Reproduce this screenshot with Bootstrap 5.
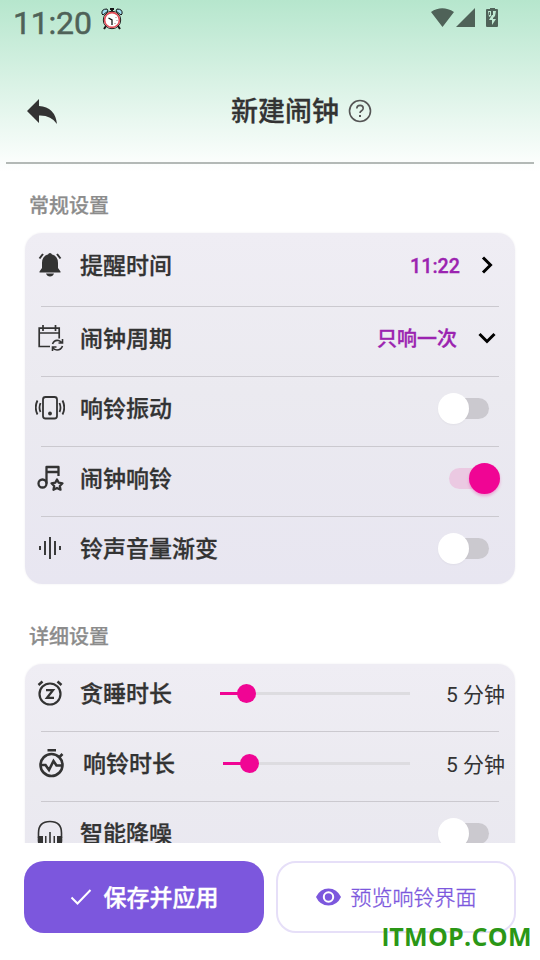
<!DOCTYPE html>
<html lang="zh-CN">
<head>
<meta charset="utf-8">
<meta name="viewport" content="width=device-width, initial-scale=1">
<title>新建闹钟</title>
<link href="https://cdn.jsdelivr.net/npm/bootstrap@5.3.0/dist/css/bootstrap.min.css" rel="stylesheet">
<style>
body{font-family:Roboto,"Noto Sans CJK SC",sans-serif;color:#333;background:linear-gradient(#b6e6cd 0,#fff 172px) #fff no-repeat;width:540px;height:960px;overflow:hidden}
svg{display:block;flex:none}
.status{height:60px;padding:0 41px 0 13px;color:#4f6258}
.clock{font-size:32px;font-weight:400;line-height:46px;letter-spacing:-.2px;-webkit-text-stroke:.5px #4f6258;width:78px}
.topbar{height:104px;margin:0 6px;padding:0 20px;border-bottom:2px solid #b3b9b6}
.heading{margin-left:173px}
.page-title{font-size:27px;font-weight:500;line-height:40px;padding-top:2px;-webkit-text-stroke:.3px}
.scroller{height:679px}
.section-label{font-size:20px;font-weight:500;line-height:30px;color:#8c8c8c;padding-left:29px;-webkit-text-stroke:.25px}
.first-label{padding-top:27px;height:69px}
.second-label{padding-top:38px;height:80px}
.panel{margin:0 25px;border-radius:17px;background:linear-gradient(#efedf4,#ebeaf0 45%,#e8e6f1 100%);box-shadow:0 0 2px rgba(70,60,90,.09)}
.setting{height:70px;padding:0 9px 8px 10px;font-size:23px;font-weight:500}
.setting .pic{width:30px;margin-right:15px}
.item-name{padding-top:4px;-webkit-text-stroke:.3px}
.h-row .item-name{padding-top:6px}
.rule{height:1px;margin:0 16px;background:#cbc9cf}
.h-first{height:73px;padding-bottom:9px}
.h-row{height:69px}
.h-last{height:67px;padding-bottom:5px}
.h-slide{height:67px;padding-bottom:9px}
.value{font-size:20px;color:#9b23b0;line-height:30px;padding-top:2px;-webkit-text-stroke:.3px}
.time-value{font-size:19.7px;padding-top:4px}
.toggle{width:52px;height:32px;margin-right:16px;position:relative}
.toggle::before{content:"";position:absolute;left:10px;top:6px;width:41px;height:21px;border-radius:11px;background:#cbc9cf}
.toggle::after{content:"";position:absolute;left:0;top:1px;width:31px;height:31px;border-radius:50%;background:#fff;box-shadow:0 1px 2px rgba(0,0,0,.04)}
.toggle.on{margin-right:6px}
.toggle.on::before{left:1px;background:#ebc9e2}
.toggle.on::after{left:21px;background:#f00594;box-shadow:0 2px 3px rgba(240,5,148,.3)}
.slider{height:19px;position:relative}
.slider::before{content:"";position:absolute;left:0;right:0;top:8px;height:3px;background:#dddce0}
.slider i{position:absolute;left:0;top:8px;height:3px;width:27px;background:#f00594}
.slider i::after{content:"";position:absolute;right:-9px;top:-8px;width:19px;height:19px;border-radius:50%;background:#f00594}
.s-one{width:190px}.s-two{width:187px}
.h-row .slider{top:1px}
.minutes{font-size:21px;font-weight:400;width:95px;margin-right:1px;text-align:right;line-height:30px;padding-top:4px}
.actions{height:117px;padding:18px 24px 0;gap:12px}
.action{height:72px;border-radius:20px;font-size:23px;line-height:34px;width:240px;padding:0}
.action span{padding-top:3px}
.save,.save:hover{background:#7c57dd;color:#fff;font-weight:500}
.save span{-webkit-text-stroke:.4px}
.preview,.preview:hover{border:2px solid #e6dff8;color:#7c57dd;font-size:21px;font-weight:300;background:#fff}
.preview span{padding-top:2px;-webkit-text-stroke:.35px}
.site-tag{position:absolute;left:382px;top:919px;font:700 25px/34px "Open Sans",sans-serif;color:#2b9716;white-space:nowrap;letter-spacing:.3px}
.site-tag span{font-family:"Liberation Sans",sans-serif}
</style>
<script src="https://cdn.jsdelivr.net/npm/bootstrap@5.3.0/dist/js/bootstrap.bundle.min.js"></script>
</head>
<body class="position-relative">
<div class="status d-flex align-items-start">
  <span class="clock">11:20</span>
  <svg class="mt-2" style="margin-left:10px" width="22" height="22" viewBox="0 0 22 22"><path d="M5 18l-2 3M17 18l2 3" stroke="#151515" stroke-width="2"/><path d="M1 6Q0 1 6 1l1 2-5 4zM21 6q1-5-5-5l-1 2 5 4z" fill="#9edcf0" stroke="#151515"/><path d="M9 1h4M11 1v3" stroke="#151515" stroke-width="2"/><circle cx="11" cy="12" r="8.7" fill="#fff" stroke="#151515"/><circle cx="11" cy="12" r="7.4" fill="#fff" stroke="#e24b55" stroke-width="1.6"/><path d="M7.500 10l3.500 2v5" fill="none" stroke="#151515" stroke-width="1.300"/><path d="M15 9v1M16 12v1M14 15v1" stroke="#888"/></svg>
  <svg class="ms-auto mt-2" width="68" height="20" viewBox="0 0 68 20" fill="currentColor"><path d="M0 4Q11-3.500 23 4L11.500 19zM44 0v19H25zM59 1V-1h5v2h2q1 0 1 1v16q0 1-1 1H56q-1 0-1-1V2q0-1 1-1z"/><path d="M57 3h3v5l-2 1zM62 3h3l-1 5-2 2zM61 7l-3 5h3v5l4-6h-3V7z" fill="#bfe8d2"/><path d="M58 4h1v3h-1z"/></svg>
</div>
<header class="topbar d-flex align-items-center">
  <svg width="32" height="26" viewBox="0 0 32 26"><path d="M1 13L13 1v7q16 1 18 18Q25 17 13 17.500V25z" fill="#333"/></svg>
  <div class="heading d-flex align-items-center">
    <h1 class="page-title m-0">新建闹钟</h1>
    <svg style="margin-left:9px" width="24" height="24" viewBox="0 0 24 24" fill="none" stroke="#555" stroke-width="1.6"><circle cx="12" cy="12" r="10.500"/><path d="M8.800 9.600q0-3.200 3.300-3.200 3.100 0 3.100 2.800 0 1.500-1.600 2.500Q12 12.700 12 14"/><path d="M12 16v2" stroke-width="2"/></svg>
  </div>
</header>
<main class="scroller overflow-hidden">
  <div class="section-label first-label">常规设置</div>
  <section class="panel">
    <div class="setting h-first d-flex align-items-center">
      <svg class="pic" width="30" height="26" viewBox="0 0 30 26"><path d="M15 1q1.500 0 2 1.500Q23 4 23 11v5l2.500 3.500v1h-21v-1L7 16v-5Q7 4 13 2.500 13.500 1 15 1zM11 21.500h8q-1 3-4 3t-4-3z" fill="#333"/><path d="M8 2L4.500 6.500M22 2l3.500 4.500" stroke="#333" stroke-width="2"/></svg>
      <span class="item-name">提醒时间</span><span class="value time-value ms-auto">11:22</span>
      <svg style="margin:0 11px 0 20px" width="15" height="20" viewBox="0 0 15 20"><path d="M3 2.500l7.500 7.500L3 17.500" fill="none" stroke="#000" stroke-width="3"/></svg>
    </div>
    <div class="rule"></div>
    <div class="setting h-row d-flex align-items-center">
      <svg class="pic" width="30" height="28" viewBox="0 0 30 28" fill="none" stroke="#333" stroke-width="1.700"><path d="M15 22.500H4.200V4.200h20v10.300M4.200 9h20M8 1v6M20.500 1v6"/><path d="M17.500 20q2-4.500 6-3.500 2 .5 3.500 2.500M27.500 15v4h-4M27.500 22q-1.500 4-5.500 4-2.500 0-4.500-2.500M17.500 27v-4h4" stroke-width="1.600"/></svg>
      <span class="item-name">闹钟周期</span><span class="value ms-auto">只响一次</span>
      <svg style="margin:0 9px 0 20px" width="20" height="15" viewBox="0 0 20 15"><path d="M2.500 4l7.500 7.500L17.500 4" fill="none" stroke="#000" stroke-width="3"/></svg>
    </div>
    <div class="rule"></div>
    <div class="setting h-row d-flex align-items-center">
      <svg class="pic" width="30" height="26" viewBox="0 0 30 26" fill="none" stroke="#333" stroke-width="1.800"><rect x="8" y="2" width="14" height="21.500" rx="2.500"/><circle cx="15" cy="18.500" r="1.900" fill="#333" stroke="none"/><path d="M5.500 8q-2 5 0 9M24.500 8q2 5 0 9M2.500 5.500q-3.500 7 0 14M27.500 5.500q3.500 7 0 14"/></svg>
      <span class="item-name">响铃振动</span><span class="toggle ms-auto"></span>
    </div>
    <div class="rule"></div>
    <div class="setting h-row d-flex align-items-center">
      <svg class="pic" width="30" height="28" viewBox="0 0 30 28" fill="none" stroke="#333" stroke-width="2.300" stroke-linejoin="round"><circle cx="7.500" cy="19.500" r="4"/><path d="M11.500 19.500V3h12v9M11.500 8h12"/><path d="M22 15.500l1.700 3.200 3.800.6-2.700 2.700.7 3.700-3.500-1.700-3.500 1.700.7-3.700-2.700-2.700 3.800-.6z"/></svg>
      <span class="item-name">闹钟响铃</span><span class="toggle on ms-auto"></span>
    </div>
    <div class="rule"></div>
    <div class="setting h-last d-flex align-items-center">
      <svg class="pic" width="30" height="24" viewBox="0 0 30 24"><path d="M5 10v4M10 5v14M15 1v22M20 5v14M25 10v4" stroke="#333" stroke-width="1.900"/></svg>
      <span class="item-name">铃声音量渐变</span><span class="toggle ms-auto"></span>
    </div>
  </section>
  <div class="section-label second-label">详细设置</div>
  <section class="panel">
    <div class="setting h-slide d-flex align-items-center">
      <svg class="pic" width="30" height="28" viewBox="0 0 30 28" fill="none" stroke="#333" stroke-width="2.200"><circle cx="15" cy="15" r="10.500"/><path d="M11 11.200h7l-6 7.600h7" stroke-width="2.300"/><path d="M3.500 6l4-3.500M26.500 6l-4-3.500" stroke-width="2.500"/></svg>
      <span class="item-name">贪睡时长</span><span class="slider s-one ms-auto"><i></i></span><span class="minutes">5 分钟</span>
    </div>
    <div class="rule"></div>
    <div class="setting h-row d-flex align-items-center">
      <svg class="pic" style="margin-right:18px" width="30" height="30" viewBox="0 0 30 30" fill="none" stroke="#333" stroke-width="2.600"><circle cx="16.500" cy="17" r="11"/><path d="M6 17h4.500l3.500 5 4.500-9 3 4.500H27M12.500 2.200h8.500M24.500 9l3-3"/></svg>
      <span class="item-name">响铃时长</span><span class="slider s-two ms-auto"><i></i></span><span class="minutes">5 分钟</span>
    </div>
    <div class="rule"></div>
    <div class="setting h-row d-flex align-items-center">
      <svg class="pic" width="30" height="28" viewBox="0 0 30 28"><path d="M3.500 19v-5q0-11.500 11.500-11.500t11.500 11.500v5" fill="none" stroke="#333" stroke-width="1.600"/><path d="M3 17h5v10H4q-2-4-1-10zM22 17h5q1 6-1 10h-4zM10 17h1.500v9H10zM14.200 13h1.600v13h-1.600zM18.500 17H20v9h-1.500z" fill="#333"/></svg>
      <span class="item-name">智能降噪</span><span class="toggle ms-auto"></span>
    </div>
    <div class="rule"></div>
    <div class="setting h-row"></div>
  </section>
</main>
<footer class="actions d-flex bg-white">
  <button class="action save btn d-flex align-items-center justify-content-center" type="button">
    <svg style="margin-right:12px" width="22" height="18" viewBox="0 0 22 18"><path d="M1.500 9.500l6 6L20.500 2" fill="none" stroke="#fff" stroke-width="2"/></svg><span>保存并应用</span>
  </button>
  <button class="action preview btn d-flex align-items-center justify-content-center" type="button">
    <svg style="margin-right:10px" width="25" height="18" viewBox="0 0 25 18"><path d="M0 9Q4 .5 12.500.5T25 9q-4 8.500-12.500 8.500T0 9z" fill="#7c57dd"/><circle cx="12.500" cy="9" r="4.700" fill="#7c57dd" stroke="#fff" stroke-width="2"/></svg><span>预览响铃界面</span>
  </button>
</footer>
<div class="site-tag"><span>I</span>TMOP.COM</div>
</body>
</html>
